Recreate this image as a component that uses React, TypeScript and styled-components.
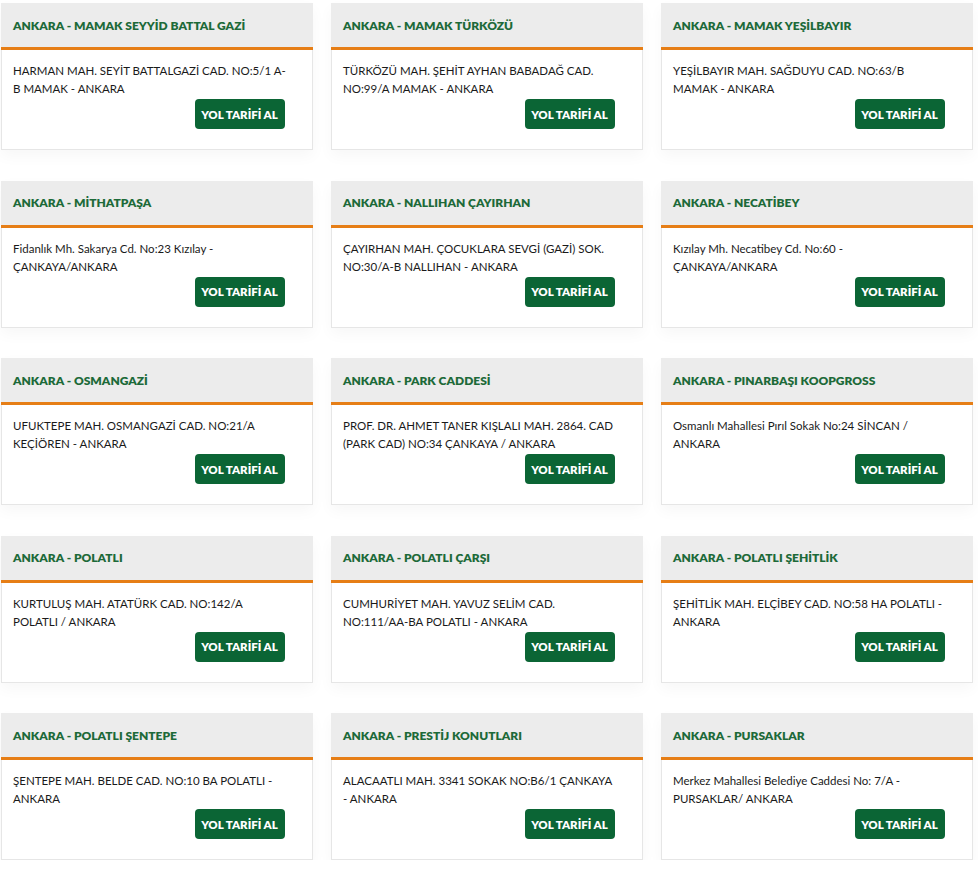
import React from "react";
import styled, { createGlobalStyle } from "styled-components";

const GlobalStyle = createGlobalStyle`
  html, body { margin: 0; padding: 0; background: #ffffff; }
  body { font-family: "Lato", "Noto Sans", sans-serif; }
  * { box-sizing: border-box; }
`;

const Grid = styled.div`
  display: grid;
  grid-template-columns: repeat(3, 311.5px);
  column-gap: 18.5px;
  row-gap: 30.5px;
  padding: 3px 0 0 1px;
`;

const Card = styled.div`
  display: flex;
  flex-direction: column;
  height: 147px;
  background: #ffffff;
  border: 1px solid #e6e6e6;
  box-shadow: 0 6px 14px rgba(0, 0, 0, 0.035);
`;

const Header = styled.div`
  display: flex;
  align-items: center;
  height: 47px;
  margin: -1px -1px 0;
  padding: 0 12px;
  background: #ececec;
  border-bottom: 3px solid #e67e16;
`;

const Title = styled.h3`
  margin: 0;
  font-size: 12px;
  font-weight: 800;
  color: #1d6a39;
  letter-spacing: 0px;
`;

const Body = styled.div`
  display: flex;
  flex-direction: column;
  padding: 12px 27px 0 11px;
`;

const Address = styled.p`
  margin: 0;
  width: 275px;
  font-size: 11.5px;
  line-height: 18px;
  color: #1a1a1a;
  height: 36px;
`;

const Actions = styled.div`
  display: flex;
  justify-content: flex-end;
  margin-top: 1px;
`;

const Button = styled.a`
  display: inline-flex;
  align-items: center;
  justify-content: center;
  width: 90px;
  height: 30px;
  border-radius: 4px;
  background: #0b6535;
  color: #ffffff;
  font-size: 11.5px;
  font-weight: 800;
  text-decoration: none;
  cursor: pointer;
`;

const branches: { title: string; address: string }[] = [
  { title: "ANKARA - MAMAK SEYYİD BATTAL GAZİ", address: "HARMAN MAH. SEYİT BATTALGAZİ CAD. NO:5/1 A-B MAMAK - ANKARA" },
  { title: "ANKARA - MAMAK TÜRKÖZÜ", address: "TÜRKÖZÜ MAH. ŞEHİT AYHAN BABADAĞ CAD. NO:99/A MAMAK - ANKARA" },
  { title: "ANKARA - MAMAK YEŞİLBAYIR", address: "YEŞİLBAYIR MAH. SAĞDUYU CAD. NO:63/B MAMAK - ANKARA" },
  { title: "ANKARA - MİTHATPAŞA", address: "Fidanlık Mh. Sakarya Cd. No:23 Kızılay - ÇANKAYA/ANKARA" },
  { title: "ANKARA - NALLIHAN ÇAYIRHAN", address: "ÇAYIRHAN MAH. ÇOCUKLARA SEVGİ (GAZİ) SOK. NO:30/A-B NALLIHAN - ANKARA" },
  { title: "ANKARA - NECATİBEY", address: "Kızılay Mh. Necatibey Cd. No:60 - ÇANKAYA/ANKARA" },
  { title: "ANKARA - OSMANGAZİ", address: "UFUKTEPE MAH. OSMANGAZİ CAD. NO:21/A KEÇİÖREN - ANKARA" },
  { title: "ANKARA - PARK CADDESİ", address: "PROF. DR. AHMET TANER KIŞLALI MAH. 2864. CAD (PARK CAD) NO:34 ÇANKAYA / ANKARA" },
  { title: "ANKARA - PINARBAŞI KOOPGROSS", address: "Osmanlı Mahallesi Pırıl Sokak No:24 SİNCAN / ANKARA" },
  { title: "ANKARA - POLATLI", address: "KURTULUŞ MAH. ATATÜRK CAD. NO:142/A POLATLI / ANKARA" },
  { title: "ANKARA - POLATLI ÇARŞI", address: "CUMHURİYET MAH. YAVUZ SELİM CAD. NO:111/AA-BA POLATLI - ANKARA" },
  { title: "ANKARA - POLATLI ŞEHİTLİK", address: "ŞEHİTLİK MAH. ELÇİBEY CAD. NO:58 HA POLATLI - ANKARA" },
  { title: "ANKARA - POLATLI ŞENTEPE", address: "ŞENTEPE MAH. BELDE CAD. NO:10 BA POLATLI - ANKARA" },
  { title: "ANKARA - PRESTİJ KONUTLARI", address: "ALACAATLI MAH. 3341 SOKAK NO:B6/1 ÇANKAYA - ANKARA" },
  { title: "ANKARA - PURSAKLAR", address: "Merkez Mahallesi Belediye Caddesi No: 7/A - PURSAKLAR/ ANKARA" },
];

export default function App() {
  return (
    <>
      <GlobalStyle />
      <Grid>
        {branches.map((b) => (
          <Card key={b.title}>
            <Header>
              <Title>{b.title}</Title>
            </Header>
            <Body>
              <Address>{b.address}</Address>
              <Actions>
                <Button>YOL TARİFİ AL</Button>
              </Actions>
            </Body>
          </Card>
        ))}
      </Grid>
    </>
  );
}
